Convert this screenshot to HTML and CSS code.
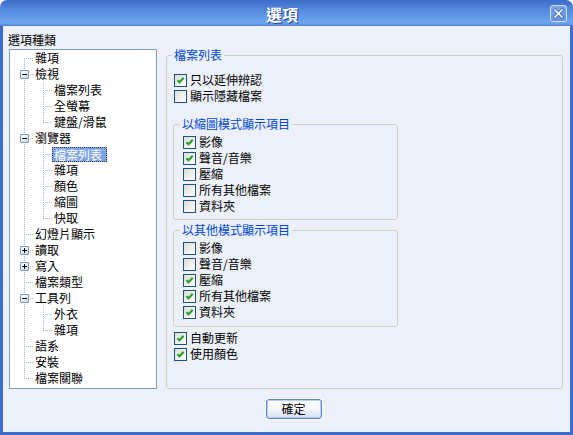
FILE: index.html
```html
<!DOCTYPE html>
<html lang="zh-Hant">
<head>
    <meta charset="UTF-8">
    <title>選項</title>
    <link rel="stylesheet" href="styles.css">
</head>
<body>
    <div class="window">
        <div class="titlebar">
            <span class="title">選項</span>
            <span class="close">
                <svg width="11" height="11" viewBox="0 0 11 11">
                    <path d="M2 2l7 7M9 2l-7 7" stroke="#2B55A8" stroke-width="3" stroke-linecap="square"/>
                    <path d="M2 2l7 7M9 2l-7 7" stroke="#fff" stroke-width="1.6" stroke-linecap="square"/>
                </svg>
            </span>
        </div>

        <div class="frame">
            <div class="body">
                <!-- category tree -->
                <div class="side">
                    <div class="side-label">選項種類</div>
                    <div class="tree">
                        <div class="node"><span class="g first"></span><span class="label">雜項</span></div>
                        <div class="node"><span class="g tee"><span class="exp minus"></span></span><span class="label">檢視</span></div>
                        <div class="node"><span class="g pipe"></span><span class="g tee"></span><span class="label">檔案列表</span></div>
                        <div class="node"><span class="g pipe"></span><span class="g tee"></span><span class="label">全螢幕</span></div>
                        <div class="node"><span class="g pipe"></span><span class="g end"></span><span class="label">鍵盤/滑鼠</span></div>
                        <div class="node"><span class="g tee"><span class="exp minus"></span></span><span class="label">瀏覽器</span></div>
                        <div class="node"><span class="g pipe"></span><span class="g tee"></span><span class="label sel">檔案列表</span></div>
                        <div class="node"><span class="g pipe"></span><span class="g tee"></span><span class="label">雜項</span></div>
                        <div class="node"><span class="g pipe"></span><span class="g tee"></span><span class="label">顏色</span></div>
                        <div class="node"><span class="g pipe"></span><span class="g tee"></span><span class="label">縮圖</span></div>
                        <div class="node"><span class="g pipe"></span><span class="g end"></span><span class="label">快取</span></div>
                        <div class="node"><span class="g tee"></span><span class="label">幻燈片顯示</span></div>
                        <div class="node"><span class="g tee"><span class="exp plus"></span></span><span class="label">讀取</span></div>
                        <div class="node"><span class="g tee"><span class="exp plus"></span></span><span class="label">寫入</span></div>
                        <div class="node"><span class="g tee"></span><span class="label">檔案類型</span></div>
                        <div class="node"><span class="g tee"><span class="exp minus"></span></span><span class="label">工具列</span></div>
                        <div class="node"><span class="g pipe"></span><span class="g tee"></span><span class="label">外衣</span></div>
                        <div class="node"><span class="g pipe"></span><span class="g end"></span><span class="label">雜項</span></div>
                        <div class="node"><span class="g tee"></span><span class="label">語系</span></div>
                        <div class="node"><span class="g tee"></span><span class="label">安裝</span></div>
                        <div class="node"><span class="g end"></span><span class="label">檔案關聯</span></div>
                    </div>
                </div>

                <!-- settings page -->
                <fieldset class="group">
                    <legend>檔案列表</legend>
                    <div class="check"><span class="cb on"><svg width="11" height="11" viewBox="0 0 11 11"><path d="M2.5 5.2l2 2 4.2-4.4" fill="none" stroke="#21A121" stroke-width="2.1"/></svg></span>只以延伸辨認</div>
                    <div class="check"><span class="cb"></span>顯示隱藏檔案</div>

                    <fieldset class="sub">
                        <legend>以縮圖模式顯示項目</legend>
                        <div class="check"><span class="cb on"><svg width="11" height="11" viewBox="0 0 11 11"><path d="M2.5 5.2l2 2 4.2-4.4" fill="none" stroke="#21A121" stroke-width="2.1"/></svg></span>影像</div>
                        <div class="check"><span class="cb on"><svg width="11" height="11" viewBox="0 0 11 11"><path d="M2.5 5.2l2 2 4.2-4.4" fill="none" stroke="#21A121" stroke-width="2.1"/></svg></span>聲音/音樂</div>
                        <div class="check"><span class="cb"></span>壓縮</div>
                        <div class="check"><span class="cb"></span>所有其他檔案</div>
                        <div class="check"><span class="cb"></span>資料夾</div>
                    </fieldset>

                    <fieldset class="sub">
                        <legend>以其他模式顯示項目</legend>
                        <div class="check"><span class="cb"></span>影像</div>
                        <div class="check"><span class="cb"></span>聲音/音樂</div>
                        <div class="check"><span class="cb on"><svg width="11" height="11" viewBox="0 0 11 11"><path d="M2.5 5.2l2 2 4.2-4.4" fill="none" stroke="#21A121" stroke-width="2.1"/></svg></span>壓縮</div>
                        <div class="check"><span class="cb on"><svg width="11" height="11" viewBox="0 0 11 11"><path d="M2.5 5.2l2 2 4.2-4.4" fill="none" stroke="#21A121" stroke-width="2.1"/></svg></span>所有其他檔案</div>
                        <div class="check"><span class="cb on"><svg width="11" height="11" viewBox="0 0 11 11"><path d="M2.5 5.2l2 2 4.2-4.4" fill="none" stroke="#21A121" stroke-width="2.1"/></svg></span>資料夾</div>
                    </fieldset>

                    <div class="check after"><span class="cb on"><svg width="11" height="11" viewBox="0 0 11 11"><path d="M2.5 5.2l2 2 4.2-4.4" fill="none" stroke="#21A121" stroke-width="2.1"/></svg></span>自動更新</div>
                    <div class="check"><span class="cb on"><svg width="11" height="11" viewBox="0 0 11 11"><path d="M2.5 5.2l2 2 4.2-4.4" fill="none" stroke="#21A121" stroke-width="2.1"/></svg></span>使用顏色</div>
                </fieldset>
            </div>

            <div class="footer">
                <button class="btn" type="button">確定</button>
            </div>
        </div>
    </div>
</body>
</html>
```

FILE: styles.css
```css
body {
    margin: 0;
    background: #fff;
    font-family: "Noto Sans CJK TC", "Noto Sans CJK SC", sans-serif;
    font-size: 12px;
    color: #000;
}
.window {
    width: 573px;
    height: 435px;
    display: flex;
    flex-direction: column;
}

/* title bar */
.titlebar {
    height: 26px;
    flex: none;
    display: flex;
    align-items: center;
    border-radius: 7px 7px 0 0;
    background: linear-gradient(#3E6DC9 0%, #5083D8 30%, #6199E7 65%, #6EA6F0 88%, #4F80D5 100%);
}
.title {
    flex: 1;
    text-align: center;
    color: #fff;
    font-weight: bold;
    font-size: 16px;
    line-height: 20px;
    padding: 1px 0 0 14px;
    text-shadow: 1px 1px 0 #1B3F95;
}
.close {
    width: 15px;
    height: 15px;
    margin-right: 6px;
    border: 1px solid #D2E0F8;
    border-radius: 3px;
    background: linear-gradient(#7CA4EA, #6690DC);
    display: flex;
    align-items: center;
    justify-content: center;
}

/* dialog face */
.frame {
    flex: 1;
    display: flex;
    flex-direction: column;
    background: #ECF0F8;
    border: 3px solid #3D6CC9;
    border-top: 0;
}
.body {
    display: grid;
    grid-template-columns: 148px 397px;
    column-gap: 9px;
    padding: 6px 0 0 6px;
}
.side-label {
    line-height: 16px;
    margin-left: -1px;
}

/* tree */
.tree {
    margin-top: 1px;
    height: 340px;
    box-sizing: border-box;
    border: 1px solid #7F9DB9;
    background: #fff;
    padding-left: 5px;
    overflow: hidden;
    --v: repeating-linear-gradient(to bottom, #A3B6D9 0 1px, transparent 1px 2px);
    --h: repeating-linear-gradient(to right, #A3B6D9 0 1px, transparent 1px 2px);
}
.node {
    display: flex;
    align-items: center;
    height: 16px;
    line-height: 16px;
    white-space: nowrap;
}
.g {
    flex: none;
    width: 19px;
    height: 16px;
    display: flex;
    align-items: center;
}
.pipe {
    background: var(--v) 9px 0 / 1px 16px no-repeat;
}
.tee {
    background: var(--v) 9px 0 / 1px 16px no-repeat, var(--h) 9px 8px / 10px 1px no-repeat;
}
.end {
    background: var(--v) 9px 0 / 1px 9px no-repeat, var(--h) 9px 8px / 10px 1px no-repeat;
}
.first {
    background: var(--v) 9px 8px / 1px 8px no-repeat, var(--h) 9px 8px / 10px 1px no-repeat;
}
.exp {
    width: 9px;
    height: 9px;
    box-sizing: border-box;
    margin: 1px 0 0 5px;
    border: 1px solid #7897BB;
    border-radius: 1px;
}
.minus {
    background: linear-gradient(#000, #000) center / 5px 1px no-repeat,
                linear-gradient(135deg, #fff 20%, #C2D3EB);
}
.plus {
    background: linear-gradient(#000, #000) center / 5px 1px no-repeat,
                linear-gradient(#000, #000) center / 1px 5px no-repeat,
                linear-gradient(135deg, #fff 20%, #C2D3EB);
}
.label {
    padding-left: 1px;
}
.label.sel {
    margin-left: -1px;
    padding: 0 4px 0 1px;
    line-height: 13px;
    border: 1px dotted #3A3A3A;
    background: #7DA4E4;
    color: #fff;
}

/* group boxes */
.group {
    margin: 15px 0 0;
    height: 342px;
    box-sizing: border-box;
    border: 1px solid #D0D0BF;
    border-radius: 3px;
    padding: 9px 6px 0;
    min-width: 0;
}
.group legend {
    padding: 0 2px;
    margin-left: -1px;
    line-height: 16px;
    color: #0046D5;
}
.sub {
    margin: 12px 0 0;
    width: 225px;
    box-sizing: border-box;
    padding: 2px 0 5px 9px;
    border: 1px solid #D0D0BF;
    border-radius: 3px;
    min-width: 0;
}
.sub legend {
    margin-left: -3px;
}
.sub + .sub {
    margin-top: 2px;
    padding-bottom: 6px;
}
.check {
    display: flex;
    align-items: center;
    gap: 3px;
    height: 16px;
    line-height: 16px;
    white-space: nowrap;
}
.group > .check {
    padding-left: 1px;
}
.check.after {
    margin-top: 3px;
}
.cb {
    flex: none;
    width: 13px;
    height: 13px;
    box-sizing: border-box;
    border: 1px solid #1C5180;
    background: linear-gradient(135deg, #DCDCD5, #FFFFFF);
    display: flex;
}

/* bottom button */
.footer {
    display: flex;
    justify-content: center;
    padding-left: 14px;
    margin-top: 10px;
}
.btn {
    width: 56px;
    height: 20px;
    padding: 0;
    font-family: inherit;
    font-size: 12px;
    line-height: 16px;
    color: #000;
    border: 1px solid #5C85D6;
    border-radius: 3px;
    background: linear-gradient(#FFFFFF, #F1F5FD 55%, #D4E0F6);
    box-shadow: inset 0 0 0 1px #B7CEF6, 0 0 0 1px #fff;
}
```
